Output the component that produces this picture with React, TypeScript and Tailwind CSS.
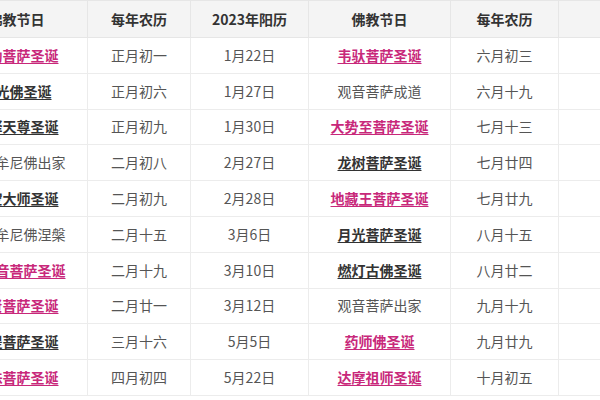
import React from 'react'

type Cell = { text: string; kind: 'pink' | 'dark' | 'plain' }

const rows: { a: Cell; lunarA: string; solarA: string; b: Cell; lunarB: string }[] = [
    { a: { text: '弥勒菩萨圣诞', kind: 'pink' }, lunarA: '正月初一', solarA: '1月22日', b: { text: '韦驮菩萨圣诞', kind: 'pink' }, lunarB: '六月初三' },
    { a: { text: '定光佛圣诞', kind: 'dark' }, lunarA: '正月初六', solarA: '1月27日', b: { text: '观音菩萨成道', kind: 'plain' }, lunarB: '六月十九' },
    { a: { text: '帝释天尊圣诞', kind: 'dark' }, lunarA: '正月初九', solarA: '1月30日', b: { text: '大势至菩萨圣诞', kind: 'pink' }, lunarB: '七月十三' },
    { a: { text: '释迦牟尼佛出家', kind: 'plain' }, lunarA: '二月初八', solarA: '2月27日', b: { text: '龙树菩萨圣诞', kind: 'dark' }, lunarB: '七月廿四' },
    { a: { text: '海空大师圣诞', kind: 'dark' }, lunarA: '二月初九', solarA: '2月28日', b: { text: '地藏王菩萨圣诞', kind: 'pink' }, lunarB: '七月廿九' },
    { a: { text: '释迦牟尼佛涅槃', kind: 'plain' }, lunarA: '二月十五', solarA: '3月6日', b: { text: '月光菩萨圣诞', kind: 'dark' }, lunarB: '八月十五' },
    { a: { text: '观世音菩萨圣诞', kind: 'pink' }, lunarA: '二月十九', solarA: '3月10日', b: { text: '燃灯古佛圣诞', kind: 'dark' }, lunarB: '八月廿二' },
    { a: { text: '普贤菩萨圣诞', kind: 'pink' }, lunarA: '二月廿一', solarA: '3月12日', b: { text: '观音菩萨出家', kind: 'plain' }, lunarB: '九月十九' },
    { a: { text: '准提菩萨圣诞', kind: 'dark' }, lunarA: '三月十六', solarA: '5月5日', b: { text: '药师佛圣诞', kind: 'pink' }, lunarB: '九月廿九' },
    { a: { text: '文殊菩萨圣诞', kind: 'pink' }, lunarA: '四月初四', solarA: '5月22日', b: { text: '达摩祖师圣诞', kind: 'pink' }, lunarB: '十月初五' },
]

function Festival({ cell }: { cell: Cell }) {
    if (cell.kind === 'pink') {
        return <a className="font-bold text-[#c8287a] underline underline-offset-2">{cell.text}</a>
    }
    if (cell.kind === 'dark') {
        return <a className="font-bold text-[#333] underline underline-offset-2">{cell.text}</a>
    }
    return <span>{cell.text}</span>
}

export default function App() {
    const th = 'border border-[#e6e6e6] font-bold text-[#333] text-center p-0'
    const td = 'border border-[#ececec] text-center p-0 whitespace-nowrap'

    return (
        <div className="w-[600px] h-[400px] overflow-hidden bg-white">
            <table
                className="table-fixed border-collapse w-[731px] min-w-[731px] -ml-[55px] text-[14px] text-[#555]"
                style={{ fontFamily: '"Noto Sans CJK SC", "Noto Sans", sans-serif' }}
            >
                <colgroup>
                    <col className="w-[142px]" />
                    <col className="w-[103px]" />
                    <col className="w-[118px]" />
                    <col className="w-[142px]" />
                    <col className="w-[108px]" />
                    <col className="w-[118px]" />
                </colgroup>
                <thead>
                    <tr className="h-[37px] bg-[#f4f4f4]">
                        <th className={th}>佛教节日</th>
                        <th className={th}>每年农历</th>
                        <th className={th}>2023年阳历</th>
                        <th className={th}>佛教节日</th>
                        <th className={th}>每年农历</th>
                        <th className={th}></th>
                    </tr>
                </thead>
                <tbody>
                    {rows.map((r, i) => (
                        <tr key={i} className="h-[35.8px]">
                            <td className={td}><Festival cell={r.a} /></td>
                            <td className={td}>{r.lunarA}</td>
                            <td className={td}>{r.solarA}</td>
                            <td className={td}><Festival cell={r.b} /></td>
                            <td className={td}>{r.lunarB}</td>
                            <td className={td}></td>
                        </tr>
                    ))}
                </tbody>
            </table>
        </div>
    )
}
